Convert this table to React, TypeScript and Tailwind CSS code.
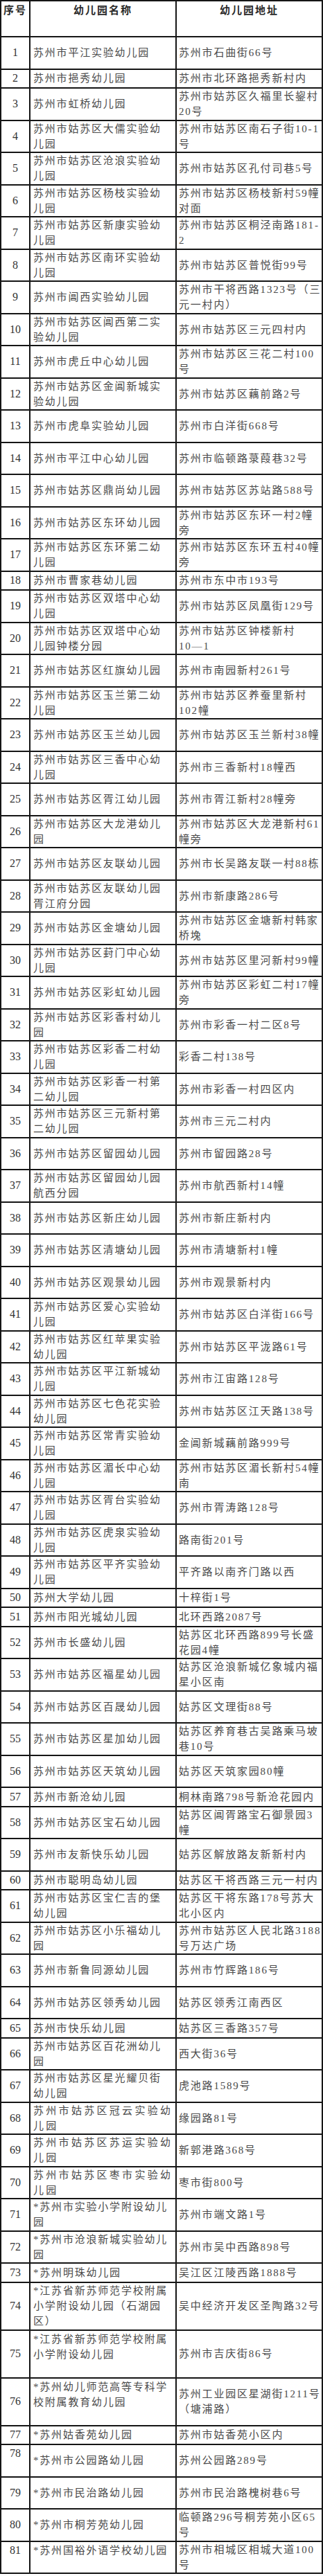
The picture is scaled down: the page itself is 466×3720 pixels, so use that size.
type Row = {
  n: number;
  name: string;
  addr: string;
  h?: 's' | 'l';
  numTop?: boolean;
  nameTop?: boolean;
  wide?: boolean;
};

const rows: Row[] = [
  { n: 1, name: '苏州市平江实验幼儿园', addr: '苏州市石曲街66号' },
  { n: 2, name: '苏州市挹秀幼儿园', addr: '苏州市北环路挹秀新村内', h: 's' },
  { n: 3, name: '苏州市虹桥幼儿园', addr: '苏州市姑苏区久福里长鋆村\n20号' },
  { n: 4, name: '苏州市姑苏区大儒实验幼\n儿园', addr: '苏州市姑苏区南石子街10-1\n号' },
  { n: 5, name: '苏州市姑苏区沧浪实验幼\n儿园', addr: '苏州市姑苏区孔付司巷5号' },
  { n: 6, name: '苏州市姑苏区杨枝实验幼\n儿园', addr: '苏州市姑苏区杨枝新村59幢\n对面' },
  { n: 7, name: '苏州市姑苏区新康实验幼\n儿园', addr: '苏州市姑苏区桐泾南路181-\n2' },
  { n: 8, name: '苏州市姑苏区南环实验幼\n儿园', addr: '苏州市姑苏区普悦街99号' },
  { n: 9, name: '苏州市阊西实验幼儿园', addr: '苏州市干将西路1323号（三\n元一村内）' },
  { n: 10, name: '苏州市姑苏区阊西第二实\n验幼儿园', addr: '苏州市姑苏区三元四村内' },
  { n: 11, name: '苏州市虎丘中心幼儿园', addr: '苏州市姑苏区三花二村100\n号' },
  { n: 12, name: '苏州市姑苏区金阊新城实\n验幼儿园', addr: '苏州市姑苏区藕前路2号' },
  { n: 13, name: '苏州市虎阜实验幼儿园', addr: '苏州市白洋街668号' },
  { n: 14, name: '苏州市平江中心幼儿园', addr: '苏州市临顿路菉葭巷32号' },
  { n: 15, name: '苏州市姑苏区鼎尚幼儿园', addr: '苏州市姑苏区苏站路588号' },
  { n: 16, name: '苏州市姑苏区东环幼儿园', addr: '苏州市姑苏区东环一村2幢\n旁' },
  { n: 17, name: '苏州市姑苏区东环第二幼\n儿园', addr: '苏州市姑苏区东环五村40幢\n旁' },
  { n: 18, name: '苏州市曹家巷幼儿园', addr: '苏州市东中市193号', h: 's' },
  { n: 19, name: '苏州市姑苏区双塔中心幼\n儿园', addr: '苏州市姑苏区凤凰街129号' },
  { n: 20, name: '苏州市姑苏区双塔中心幼\n儿园钟楼分园', addr: '苏州市姑苏区钟楼新村\n10—1' },
  { n: 21, name: '苏州市姑苏区红旗幼儿园', addr: '苏州市南园新村261号' },
  { n: 22, name: '苏州市姑苏区玉兰第二幼\n儿园', addr: '苏州市姑苏区养蚕里新村\n102幢' },
  { n: 23, name: '苏州市姑苏区玉兰幼儿园', addr: '苏州市姑苏区玉兰新村38幢' },
  { n: 24, name: '苏州市姑苏区三香中心幼\n儿园', addr: '苏州市三香新村18幢西' },
  { n: 25, name: '苏州市姑苏区胥江幼儿园', addr: '苏州市胥江新村28幢旁' },
  { n: 26, name: '苏州市姑苏区大龙港幼儿\n园', addr: '苏州市姑苏区大龙港新村61\n幢旁' },
  { n: 27, name: '苏州市姑苏区友联幼儿园', addr: '苏州市长吴路友联一村88栋' },
  { n: 28, name: '苏州市姑苏区友联幼儿园\n胥江府分园', addr: '苏州市新康路286号' },
  { n: 29, name: '苏州市姑苏区金塘幼儿园', addr: '苏州市姑苏区金塘新村韩家\n桥堍' },
  { n: 30, name: '苏州市姑苏区葑门中心幼\n儿园', addr: '苏州市姑苏区里河新村99幢' },
  { n: 31, name: '苏州市姑苏区彩虹幼儿园', addr: '苏州市姑苏区彩虹二村17幢\n旁' },
  { n: 32, name: '苏州市姑苏区彩香村幼儿\n园', addr: '苏州市彩香一村二区8号' },
  { n: 33, name: '苏州市姑苏区彩香二村幼\n儿园', addr: '彩香二村138号' },
  { n: 34, name: '苏州市姑苏区彩香一村第\n二幼儿园', addr: '苏州市彩香一村四区内' },
  { n: 35, name: '苏州市姑苏区三元新村第\n二幼儿园', addr: '苏州市三元二村内' },
  { n: 36, name: '苏州市姑苏区留园幼儿园', addr: '苏州市留园路28号' },
  { n: 37, name: '苏州市姑苏区留园幼儿园\n航西分园', addr: '苏州市航西新村14幢' },
  { n: 38, name: '苏州市姑苏区新庄幼儿园', addr: '苏州市新庄新村内' },
  { n: 39, name: '苏州市姑苏区清塘幼儿园', addr: '苏州市清塘新村1幢' },
  { n: 40, name: '苏州市姑苏区观景幼儿园', addr: '苏州市观景新村内' },
  { n: 41, name: '苏州市姑苏区爱心实验幼\n儿园', addr: '苏州市姑苏区白洋街166号' },
  { n: 42, name: '苏州市姑苏区红苹果实验\n幼儿园', addr: '苏州市姑苏区平泷路61号' },
  { n: 43, name: '苏州市姑苏区平江新城幼\n儿园', addr: '苏州市江宙路128号' },
  { n: 44, name: '苏州市姑苏区七色花实验\n幼儿园', addr: '苏州市姑苏区江天路138号' },
  { n: 45, name: '苏州市姑苏区常青实验幼\n儿园', addr: '金阊新城藕前路999号' },
  { n: 46, name: '苏州市姑苏区湄长中心幼\n儿园', addr: '苏州市姑苏区湄长新村54幢\n南' },
  { n: 47, name: '苏州市姑苏区胥台实验幼\n儿园', addr: '苏州市胥涛路128号' },
  { n: 48, name: '苏州市姑苏区虎泉实验幼\n儿园', addr: '路南街201号' },
  { n: 49, name: '苏州市姑苏区平齐实验幼\n儿园', addr: '平齐路以南齐门路以西' },
  { n: 50, name: '苏州大学幼儿园', addr: '十梓街1号', h: 's' },
  { n: 51, name: '苏州市阳光城幼儿园', addr: '北环西路2087号', h: 's' },
  { n: 52, name: '苏州市长盛幼儿园', addr: '姑苏区北环西路899号长盛\n花园4幢' },
  { n: 53, name: '苏州市姑苏区福星幼儿园', addr: '姑苏区沧浪新城亿象城内福\n星小区南' },
  { n: 54, name: '苏州市姑苏区百晟幼儿园', addr: '姑苏区文理街88号' },
  { n: 55, name: '苏州市姑苏区星加幼儿园', addr: '姑苏区养育巷古吴路乘马坡\n巷10号' },
  { n: 56, name: '苏州市姑苏区天筑幼儿园', addr: '姑苏区天筑家园80幢' },
  { n: 57, name: '苏州市新沧幼儿园', addr: '桐林南路798号新沧花园内', h: 's' },
  { n: 58, name: '苏州市姑苏区宝石幼儿园', addr: '姑苏区阊胥路宝石御景园3\n幢' },
  { n: 59, name: '苏州市友新快乐幼儿园', addr: '姑苏区解放路友新新村内' },
  { n: 60, name: '苏州市聪明岛幼儿园', addr: '姑苏区干将西路三元一村内', h: 's' },
  { n: 61, name: '苏州市姑苏区宝仁吉的堡\n幼儿园', addr: '姑苏区干将东路178号苏大\n北小区内' },
  { n: 62, name: '苏州市姑苏区小乐福幼儿\n园', addr: '苏州市姑苏区人民北路3188\n号万达广场' },
  { n: 63, name: '苏州市新鲁同源幼儿园', addr: '苏州市竹辉路186号' },
  { n: 64, name: '苏州市姑苏区领秀幼儿园', addr: '姑苏区领秀江南西区' },
  { n: 65, name: '苏州市快乐幼儿园', addr: '姑苏区三香路357号', h: 's' },
  { n: 66, name: '苏州市姑苏区百花洲幼儿\n园', addr: '西大街36号' },
  { n: 67, name: '苏州市姑苏区星光耀贝街\n幼儿园', addr: '虎池路1589号' },
  { n: 68, name: '苏州市姑苏区冠云实验幼\n儿园', addr: '缘园路81号', wide: true },
  { n: 69, name: '苏州市姑苏区苏运实验幼\n儿园', addr: '新郭港路368号', wide: true },
  { n: 70, name: '苏州市姑苏区枣市实验幼\n儿园', addr: '枣市街800号', wide: true },
  { n: 71, name: '*苏州市实验小学附设幼儿\n园', addr: '苏州市端文路1号' },
  { n: 72, name: '*苏州市沧浪新城实验幼儿\n园', addr: '苏州市吴中西路898号' },
  { n: 73, name: '*苏州明珠幼儿园', addr: '吴江区江陵西路1888号', h: 's' },
  { n: 74, name: '*江苏省新苏师范学校附属\n小学附设幼儿园（石湖园\n区）', addr: '吴中经济开发区圣陶路32号', h: 'l' },
  { n: 75, name: '*江苏省新苏师范学校附属\n小学附设幼儿园', addr: '苏州市吉庆街86号', h: 'l', nameTop: true },
  { n: 76, name: '*苏州幼儿师范高等专科学\n校附属教育幼儿园', addr: '苏州工业园区星湖街1211号\n（塘浦路）', h: 'l', nameTop: true },
  { n: 77, name: '*苏州姑香苑幼儿园', addr: '苏州市姑香苑小区内', h: 's' },
  { n: 78, name: '*苏州市公园路幼儿园', addr: '苏州公园路289号', numTop: true },
  { n: 79, name: '*苏州市民治路幼儿园', addr: '苏州市民治路槐树巷6号' },
  { n: 80, name: '*苏州市桐芳苑幼儿园', addr: '临顿路296号桐芳苑小区65\n号' },
  { n: 81, name: '*苏州国裕外语学校幼儿园', addr: '苏州市相城区相城大道100\n号', numTop: true, nameTop: true },
];

const heights = { s: 'h-[27.5px]', m: 'h-[46.5px]', l: 'h-[69px]' };

const font = { fontFamily: '"Liberation Serif", "Noto Sans CJK SC", serif' };

function KindergartenRow({ row }: { row: Row }) {
  return (
    <div className={`grid grid-cols-[42px_211px_1fr] ${heights[row.h ?? 'm']}`}>
      <div
        className={`flex justify-center border-r-2 border-b-2 border-[#151515] text-[16px] text-[#333] ${
          row.numTop ? 'items-start pt-[1px]' : 'items-center'
        }`}
      >
        {row.n}
      </div>
      <div
        className={`flex overflow-hidden border-r-2 border-b-2 border-[#151515] pl-[4px] whitespace-pre ${
          row.nameTop ? 'items-start pt-[1px]' : 'items-center'
        } ${row.wide ? 'tracking-[3.3px]' : 'tracking-[1.8px]'}`}
      >
        {row.name}
      </div>
      <div className="flex items-center overflow-hidden border-r-2 border-b-2 border-[#151515] pl-[3px] tracking-[1.8px] whitespace-pre">
        {row.addr}
      </div>
    </div>
  );
}

export default function App() {
  return (
    <div
      className="w-[466px] border-t-2 border-l-2 border-[#151515] bg-white text-[15px] leading-[22px] text-[#4a4a4a]"
      style={font}
    >
      <div className="grid h-[52px] grid-cols-[42px_211px_1fr] font-bold tracking-[2px] text-[#2a2a2a]">
        <div className="border-r-2 border-b-2 border-[#151515] pt-[2px] text-center">序号</div>
        <div className="border-r-2 border-b-2 border-[#151515] pt-[2px] text-center">幼儿园名称</div>
        <div className="border-r-2 border-b-2 border-[#151515] pt-[2px] text-center">幼儿园地址</div>
      </div>
      {rows.map((row) => (
        <KindergartenRow key={row.n} row={row} />
      ))}
    </div>
  );
}
